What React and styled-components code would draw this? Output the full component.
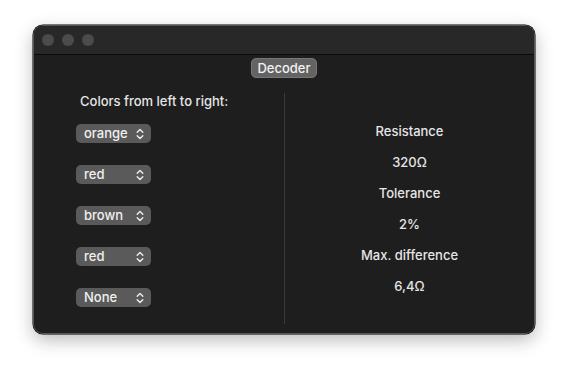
import React from "react"
import styled, { createGlobalStyle } from "styled-components"

const GlobalStyle = createGlobalStyle`
  html, body {
    margin: 0;
    padding: 0;
    background: #ffffff;
  }
  body {
    font-family: Inter, "Liberation Sans", sans-serif;
    -webkit-font-smoothing: antialiased;
  }
`

const Page = styled.div`
  width: 568px;
  height: 376px;
  padding: 25px 0 0 33px;
  box-sizing: border-box;
`

const Window = styled.div`
  width: 502px;
  height: 309px;
  box-sizing: border-box;
  border-radius: 10px;
  background: #1e1e1e;
  border: 1px solid #555;
  box-shadow: 0 0 0 0.5px #000, 0 6px 18px rgba(0, 0, 0, 0.28);
  overflow: hidden;
  display: flex;
  flex-direction: column;
`

const TitleBar = styled.div`
  height: 28px;
  flex: none;
  background: #282828;
  border-bottom: 1px solid #0a0a0a;
  display: flex;
  align-items: center;
  gap: 8px;
  padding-left: 8px;
`

const Light = styled.span`
  width: 12px;
  height: 12px;
  border-radius: 50%;
  background: #4b4b4b;
`

const Body = styled.div`
  flex: 1;
  display: flex;
  flex-direction: column;
  align-items: center;
`

const Tab = styled.div`
  margin-top: 3px;
  height: 20px;
  padding: 0 5px;
  box-sizing: border-box;
  border-radius: 5px;
  background: #636363;
  border: 0.5px solid #777;
  color: #f2f2f2;
  font-size: 13px;
  font-weight: 500;
  line-height: 19px;
`

const Columns = styled.div`
  margin-top: 14px;
  align-self: stretch;
  height: 232px;
  display: grid;
  grid-template-columns: 250px 1px 1fr;
`

const Left = styled.div`
  display: flex;
  flex-direction: column;
  padding: 1px 0 0 42px;
`

const Label = styled.div`
  color: #e6e6e6;
  font-size: 13px;
  font-weight: 500;
  line-height: 16px;
  padding-left: 4px;
`

const PopupList = styled.div`
  margin-top: 15px;
  display: flex;
  flex-direction: column;
  gap: 22px;
`

const Popup = styled.div`
  width: 75px;
  height: 19px;
  box-sizing: border-box;
  border-radius: 5px;
  background: #5a5a5a;
  color: #f0f0f0;
  font-size: 13px;
  font-weight: 500;
  line-height: 19px;
  display: flex;
  align-items: center;
  justify-content: space-between;
  padding: 0 7px 0 8px;
`

const Divider = styled.div`
  margin-top: 1px;
  background: #3a3a3a;
`

const Right = styled.div`
  display: flex;
  flex-direction: column;
  align-items: center;
  padding-top: 31px;
  gap: 15px;
`

const Value = styled.div`
  color: #e6e6e6;
  font-size: 13px;
  font-weight: 500;
  line-height: 16px;
`

const Chevrons = () => (
  <svg width="8" height="12" viewBox="0 0 8 12" fill="none">
    <path d="M1.2 4.3 L4 1.5 L6.8 4.3" stroke="#ededed" strokeWidth="1.4" strokeLinecap="round" strokeLinejoin="round" />
    <path d="M1.2 7.7 L4 10.5 L6.8 7.7" stroke="#ededed" strokeWidth="1.4" strokeLinecap="round" strokeLinejoin="round" />
  </svg>
)

const bands = ["orange", "red", "brown", "red", "None"]
const results = ["Resistance", "320Ω", "Tolerance", "2%", "Max. difference", "6,4Ω"]

export default function App() {
  return (
    <Page>
      <GlobalStyle />
      <Window>
        <TitleBar>
          <Light />
          <Light />
          <Light />
        </TitleBar>
        <Body>
          <Tab>Decoder</Tab>
          <Columns>
            <Left>
              <Label>Colors from left to right:</Label>
              <PopupList>
                {bands.map((b, i) => (
                  <Popup key={i}>
                    <span>{b}</span>
                    <Chevrons />
                  </Popup>
                ))}
              </PopupList>
            </Left>
            <Divider />
            <Right>
              {results.map((r, i) => (
                <Value key={i}>{r}</Value>
              ))}
            </Right>
          </Columns>
        </Body>
      </Window>
    </Page>
  )
}
